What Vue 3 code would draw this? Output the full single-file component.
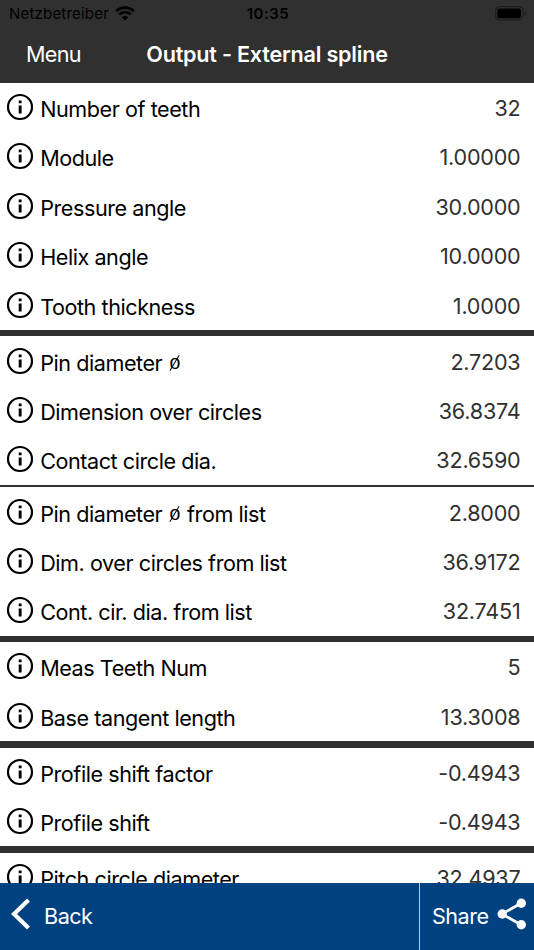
<script setup>
import {ref} from 'vue';

const groups = ref([
	{
		rows: [
			{label: 'Number of teeth', value: '32'},
			{label: 'Module', value: '1.00000'},
			{label: 'Pressure angle', value: '30.0000'},
			{label: 'Helix angle', value: '10.0000'},
			{label: 'Tooth thickness', value: '1.0000'},
		],
	},
	{
		thin: true,
		rows: [
			{label: 'Pin diameter', symbol: 'o', value: '2.7203'},
			{label: 'Dimension over circles', value: '36.8374'},
			{label: 'Contact circle dia.', value: '32.6590'},
		],
	},
	{
		rows: [
			{label: 'Pin diameter', symbol: 'o', after: 'from list', value: '2.8000'},
			{label: 'Dim. over circles from list', value: '36.9172'},
			{label: 'Cont. cir. dia. from list', value: '32.7451'},
		],
	},
	{
		rows: [
			{label: 'Meas Teeth Num', value: '5'},
			{label: 'Base tangent length', value: '13.3008'},
		],
	},
	{
		rows: [
			{label: 'Profile shift factor', value: '-0.4943'},
			{label: 'Profile shift', value: '-0.4943'},
		],
	},
	{
		rows: [{label: 'Pitch circle diameter', value: '32.4937'}],
	},
]);
</script>

<template>
	<div class="screen">
		<header class="top">
			<div class="status">
				<div class="carrier">
					<span>Netzbetreiber</span>
					<svg class="wifi" viewBox="0 0 20 15">
						<path d="M1.2 5.2A12.6 12.6 0 0 1 18.8 5.2" />
						<path d="M4.3 8.4A8.2 8.2 0 0 1 15.7 8.4" />
						<path class="wifi-dot" d="M6.7 11.3A4.8 4.8 0 0 1 13.3 11.3L10 14.6Z" />
					</svg>
				</div>
				<span class="time">10:35</span>
				<svg class="battery" viewBox="0 0 32 15">
					<rect class="battery-case" x="0.7" y="0.7" width="27.4" height="13.2" rx="4" />
					<rect x="2.4" y="2.4" width="23.6" height="9.8" rx="2.2" />
					<path d="M29.7 5Q31.3 5.7 31.3 7.3T29.7 9.6Z" class="battery-tip" />
				</svg>
			</div>
			<nav class="nav">
				<span class="menu">Menu</span>
				<h1 class="title">Output - External spline</h1>
			</nav>
		</header>

		<main class="list">
			<section v-for="(group, i) in groups" :key="i" class="group" :class="{thin: group.thin}">
				<div v-for="row in group.rows" :key="row.label" class="row">
					<svg class="info" viewBox="0 0 28 28">
						<circle cx="14" cy="14" r="12" />
						<path d="M12.7 7.6h2.9v2.7h-2.9zM12.7 12.4h2.9v8.1h-2.9z" />
					</svg>
					<span class="label">
						{{ row.label }}
						<template v-if="row.symbol">
							<span class="symbol">{{ row.symbol }}</span>
							{{ row.after }}
						</template>
					</span>
					<span class="value">{{ row.value }}</span>
				</div>
			</section>
		</main>

		<footer class="bottom">
			<div class="back">
				<svg class="chevron" viewBox="0 0 20 32">
					<path d="M17.5 2L3 16L17.5 30" />
				</svg>
				<span>Back</span>
			</div>
			<div class="share">
				<span>Share</span>
				<svg class="share-icon" viewBox="0 0 30 32">
					<path d="M24.5 5L5 16L24.5 27" />
					<circle cx="24.3" cy="5.2" r="4.7" />
					<circle cx="5.2" cy="16" r="4.7" />
					<circle cx="24.3" cy="26.8" r="4.7" />
				</svg>
			</div>
		</footer>
	</div>
</template>

<style>
body {
	margin: 0;
}
</style>

<style scoped>
.screen {
	display: flex;
	flex-direction: column;
	width: 534px;
	height: 950px;
	overflow: hidden;
	background: #fff;
	font-family: Inter, 'Liberation Sans', sans-serif;
	font-size: 21.6px;
	line-height: 28px;
	color: #000;
}

/* HEADER */
.top {
	flex: none;
	height: 82.7px;
	background: #303030;
}
.status {
	display: grid;
	grid-template-columns: 1fr auto 1fr;
	align-items: center;
	height: 27px;
	padding: 0 7px 0 9px;
	font-size: 15px;
	line-height: 27px;
}
.carrier {
	display: flex;
	align-items: center;
	gap: 6px;
	letter-spacing: 0.2px;
}
.wifi {
	width: 20px;
	height: 15px;
	fill: none;
	stroke: #000;
	stroke-width: 2.6;
}
.wifi .wifi-dot {
	fill: #000;
	stroke: none;
}
.time {
	font-weight: 600;
	letter-spacing: 0.5px;
}
.battery {
	justify-self: end;
	width: 32px;
	height: 15px;
}
.battery-case {
	fill: none;
	stroke: #1d1d1d;
	stroke-width: 1.2;
}
.battery-tip {
	fill: #1d1d1d;
}
.nav {
	display: grid;
	grid-template-columns: 1fr auto 1fr;
	align-items: center;
	height: 54px;
	color: #fff;
}
.menu {
	padding-left: 26px;
	letter-spacing: -0.7px;
}
.title {
	margin: 0;
	font-size: 21.6px;
	font-weight: 600;
	line-height: 28px;
	letter-spacing: -0.22px;
}

/* LIST */
.list {
	flex: 1;
	min-height: 0;
	overflow: hidden;
}
.group::after {
	content: '';
	display: block;
	height: 6.5px;
	background: #303030;
}
.group.thin::after {
	height: 2.7px;
}
.row {
	display: flex;
	align-items: center;
	height: 49.44px;
	padding: 0 13.5px 0 6px;
}
.info {
	flex: none;
	width: 28px;
	height: 28px;
	margin-bottom: 1px;
}
.info circle {
	fill: none;
	stroke: #000;
	stroke-width: 2.2;
}
.label {
	flex: 1;
	padding: 3px 0 0 6.2px;
	letter-spacing: -0.45px;
	white-space: nowrap;
}
/* diameter sign: an o with a long steep slash over it */
.symbol {
	position: relative;
	top: -2px;
	display: inline-block;
	width: 11px;
	margin: 0 1px 0 1.5px;
	font-family: 'Liberation Sans', sans-serif;
	font-size: 19.5px;
	line-height: 20px;
	letter-spacing: 0;
}
.symbol::after {
	content: '';
	position: absolute;
	top: 2.5px;
	left: 4.8px;
	width: 1.3px;
	height: 18px;
	background: #000;
	transform: rotate(31deg);
}
.value {
	padding-top: 1px;
	color: #303030;
	letter-spacing: -0.22px;
}

/* FOOTER */
.bottom {
	display: flex;
	flex: none;
	height: 67px;
	background: #00427f;
	color: #fff;
}
.back,
.share {
	display: flex;
	align-items: center;
	padding-bottom: 2px;
	letter-spacing: -0.5px;
}
.back {
	flex: 1;
	gap: 13px;
	padding-left: 11px;
}
.share {
	width: 114px;
	gap: 8px;
	border-left: 1px solid #b8cadb;
}
.share span {
	padding-left: 12px;
}
.chevron {
	width: 20px;
	height: 32px;
	margin-bottom: 4px;
	fill: none;
	stroke: #fff;
	stroke-width: 4.2;
}
.share-icon {
	width: 30px;
	height: 32px;
	margin-bottom: 4px;
	fill: #fff;
}
.share-icon path {
	fill: none;
	stroke: #fff;
	stroke-width: 2.8;
}
</style>
